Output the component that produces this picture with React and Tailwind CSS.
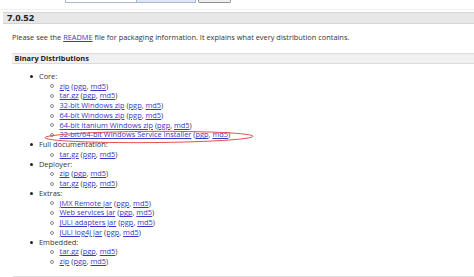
import React from "react";

const L = ({ children }) => (
  <a className="text-[#3838c8] underline decoration-[0.5px] underline-offset-[1px]">{children}</a>
);

const Item = ({ name }) => (
  <span>
    <L>{name}</L> (<L>pgp</L>, <L>md5</L>)
  </span>
);

const Main = ({ children }) => (
  <div className="flex items-center h-[9.75px] pl-[30px]">
    <span className="w-[3px] h-[3px] rounded-full bg-[#222]" />
    <span className="ml-[6px]">{children}</span>
  </div>
);

const Sub = ({ name }) => (
  <div className="flex items-center h-[9.75px] pl-[50px]">
    <span className="w-[4px] h-[4px] rounded-full border border-[#8a8a8a]" />
    <span className="ml-[5.5px]">
      <Item name={name} />
    </span>
  </div>
);

export default function App() {
  const groups = [
    ["Core:", ["zip", "tar.gz", "32-bit Windows zip", "64-bit Windows zip", "64-bit Itanium Windows zip", "32-bit/64-bit Windows Service Installer"]],
    ["Full documentation:", ["tar.gz"]],
    ["Deployer:", ["zip", "tar.gz"]],
    ["Extras:", ["JMX Remote jar", "Web services jar", "JULI adapters jar", "JULI log4j jar"]],
    ["Embedded:", ["tar.gz", "zip"]],
  ];
  return (
    <div
      className="relative w-[474px] h-[277px] overflow-hidden bg-white text-[#333] text-[7.4px] leading-[9.75px]"
      style={{ fontFamily: '"Open Sans", "Noto Sans", sans-serif' }}
    >
      {/* top form remnants */}
      <div className="flex h-[3px] pl-[65px]">
        <div className="w-[72px] h-[3px] bg-white border-x border-b border-[#a9b6d0]" />
        <div className="w-[59px] h-[3px] bg-[#dfe6f6] border-r border-b border-[#a9b6d0]" />
        <div className="ml-[2px] w-[33px] h-[3px] bg-[#efefef] border-x border-b border-[#8f8f8f] rounded-b-[2px]" />
      </div>
      <div className="mt-[6px] h-px bg-[#f0f0f0]" />

      {/* version bar */}
      <div className="mt-[2px] ml-[3px] h-[12px] bg-[#e7e7e7] border-y border-[#d4d4d4] flex items-center pl-[4px]">
        <span className="font-bold text-[9.5px] text-[#222]">7.0.52</span>
      </div>

      <div className="mt-[9.3px] pl-[12px] h-[10px] flex items-center whitespace-pre">
        Please see the <L>README</L> file for packaging information. It explains what every distribution contains.
      </div>

      {/* binary distributions bar */}
      <div className="mt-[10px] ml-[11.5px] h-[10.5px] bg-[#f1f1f1] border-y border-[#dcdcdc] flex items-center pl-[3px]">
        <span className="font-bold text-[7.4px] text-[#222]">Binary Distributions</span>
      </div>

      <div className="mt-[8px]">
        {groups.map(([title, items]) => (
          <div key={title}>
            <Main>{title}</Main>
            {items.map((n) => (
              <Sub key={n} name={n} />
            ))}
          </div>
        ))}
      </div>

      <div className="mt-[9.5px] ml-[13px] h-px bg-[#dedede]" />

      {/* red ellipse highlight */}
      <svg className="absolute left-0 top-0 pointer-events-none" width="474" height="277">
        <ellipse cx="149" cy="137" rx="104" ry="5.6" fill="none" stroke="#e53a3a" strokeWidth="0.9" transform="rotate(-0.4 149 137)" />
      </svg>
    </div>
  );
}
